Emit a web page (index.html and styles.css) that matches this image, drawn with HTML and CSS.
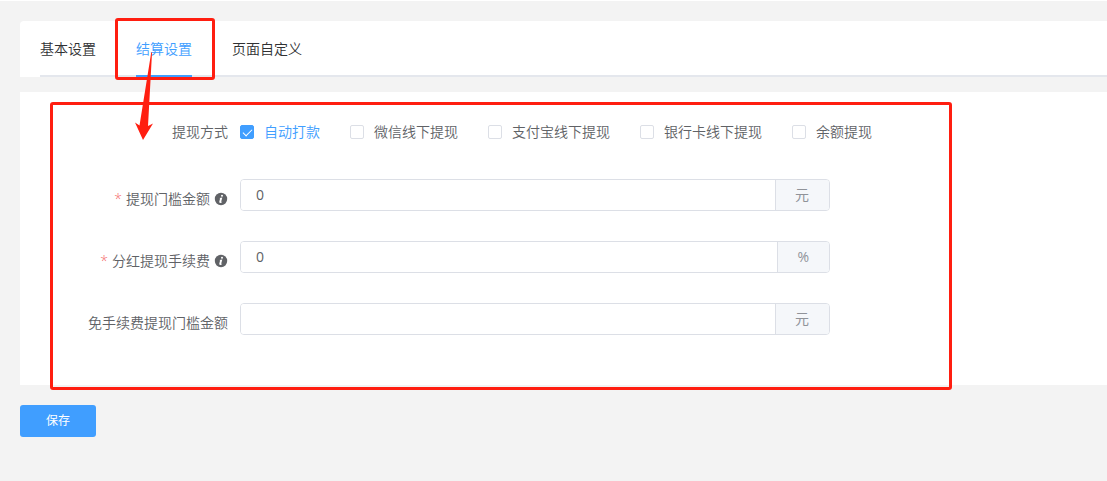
FILE: index.html
```html
<!DOCTYPE html>
<html lang="zh-CN">
<head>
  <meta charset="UTF-8" />
  <meta name="viewport" content="width=device-width, initial-scale=1.0"/>
  <title>结算设置</title>
  <link rel="stylesheet" href="styles.css">
</head>
<body>
  <main class="page">
    <nav class="tabs">
      <div class="tabs-nav">
        <button type="button" class="tab">基本设置</button>
        <button type="button" class="tab active">结算设置<span class="mark mark-tab"></span></button>
        <button type="button" class="tab">页面自定义</button>
      </div>
      <svg class="arrow" width="18" height="88" viewBox="0 0 18 88" aria-hidden="true">
        <path d="M16.300 0 L17 1 L13 74 L18 71.500 L8 88 L0 70.500 L4.500 73.500 Z" fill="#ff1e10"/>
      </svg>
    </nav>

    <form id="settleForm">
      <div class="panel">
        <div class="form-item methods" role="group" aria-labelledby="methodLabel">
          <span class="form-label" id="methodLabel">提现方式</span>
          <div class="checkbox-group">
            <label class="checkbox"><input type="checkbox" name="method" checked><span>自动打款</span></label>
            <label class="checkbox"><input type="checkbox" name="method"><span>微信线下提现</span></label>
            <label class="checkbox"><input type="checkbox" name="method"><span>支付宝线下提现</span></label>
            <label class="checkbox"><input type="checkbox" name="method"><span>银行卡线下提现</span></label>
            <label class="checkbox"><input type="checkbox" name="method"><span>余额提现</span></label>
          </div>
        </div>

        <div class="form-item">
          <label class="form-label required" for="minAmount">提现门槛金额
            <svg class="info" width="14" height="14" viewBox="0 0 14 14" aria-hidden="true">
              <circle cx="7" cy="7" r="6.200" fill="#606266"/>
              <circle cx="8" cy="3.800" r="1" fill="#fff"/>
              <path d="M5.400 6 L8.300 5.600 L7.200 9.800 Q7.100 10.300 8.300 9.500 Q7.500 11 6.200 11 Q4.900 11 5.300 9.600 L6.100 6.600 Z" fill="#fff"/>
            </svg>
          </label>
          <div class="input-group">
            <input type="text" id="minAmount" value="0">
            <span class="append">元</span>
          </div>
        </div>

        <div class="form-item">
          <label class="form-label required" for="feeRate">分红提现手续费
            <svg class="info" width="14" height="14" viewBox="0 0 14 14" aria-hidden="true">
              <circle cx="7" cy="7" r="6.200" fill="#606266"/>
              <circle cx="8" cy="3.800" r="1" fill="#fff"/>
              <path d="M5.400 6 L8.300 5.600 L7.200 9.800 Q7.100 10.300 8.300 9.500 Q7.500 11 6.200 11 Q4.900 11 5.300 9.600 L6.100 6.600 Z" fill="#fff"/>
            </svg>
          </label>
          <div class="input-group">
            <input type="text" id="feeRate" value="0">
            <span class="append">%</span>
          </div>
        </div>

        <div class="form-item">
          <label class="form-label" for="freeAmount">免手续费提现门槛金额</label>
          <div class="input-group">
            <input type="text" id="freeAmount">
            <span class="append">元</span>
          </div>
        </div>
        <span class="mark mark-form"></span>
      </div>

      <button type="submit" class="save">保存</button>
    </form>
  </main>
</body>
</html>
```
FILE: styles.css
```css
* {
  box-sizing: border-box;
}

body {
  margin: 0;
  border-top: 1px solid #fff;
  background: #f3f3f3;
  color: #606266;
  font-family: "Open Sans", "Noto Sans CJK SC", sans-serif;
  font-size: 14px;
  font-weight: 350;
}

button, input {
  font: inherit;
}

.page {
  padding: 20px 0 20px 20px;
}

.tabs {
  position: relative;
  padding-left: 20px;
  background: #fff;
  border-top-left-radius: 4px;
}

.tabs-nav {
  display: flex;
  gap: 40px;
  height: 56px;
  border-bottom: 2px solid #e4e7ed;
}

.tab {
  position: relative;
  height: 56px;
  padding: 2px 0 0;
  border: none;
  border-bottom: 2px solid transparent;
  background: none;
  color: #303133;
  line-height: 52px;
  cursor: pointer;
}

.tab.active {
  color: #409eff;
  border-bottom-color: #409eff;
}

/* red callouts */
.mark {
  position: absolute;
  z-index: 2;
  border: 3px solid #ff1e10;
  border-radius: 3px;
  pointer-events: none;
}

.mark-tab {
  top: -3px;
  left: -21px;
  width: 100px;
  height: 62px;
}

.mark-form {
  top: 10px;
  left: 30px;
  width: 902px;
  height: 288px;
}

.arrow {
  position: absolute;
  z-index: 3;
  top: 31px;
  left: 115px;
  pointer-events: none;
}

.panel {
  position: relative;
  margin-top: 15px;
  padding: 20px 20px 20px 0;
  background: #fff;
}

.form-item {
  display: flex;
  align-items: flex-start;
  margin-bottom: 22px;
}

.methods {
  margin-bottom: 27px;
}

.form-label {
  display: flex;
  flex-shrink: 0;
  align-items: center;
  justify-content: flex-end;
  width: 220px;
  padding-right: 12px;
  line-height: 40px;
}

.required::before {
  content: "*";
  margin-right: 4px;
  color: #f56c6c;
}

.info {
  margin-left: 4px;
}

.checkbox-group {
  display: flex;
  flex-wrap: wrap;
  column-gap: 30px;
}

.checkbox {
  display: flex;
  align-items: center;
  gap: 10px;
  line-height: 40px;
  cursor: pointer;
}

.checkbox input {
  appearance: none;
  display: grid;
  place-items: center;
  width: 14px;
  height: 14px;
  margin: 0;
  border: 1px solid #dcdfe6;
  border-radius: 2px;
  background: #fff;
}

.checkbox input:checked {
  border-color: #409eff;
  background: #409eff;
}

.checkbox input:checked::after {
  content: "";
  width: 4px;
  height: 8px;
  margin-bottom: 2px;
  border: solid #fff;
  border-width: 0 1px 1px 0;
  transform: rotate(45deg);
}

.checkbox input:checked + span {
  color: #409eff;
}

.input-group {
  display: flex;
  flex: 1;
  max-width: 590px;
  height: 32px;
  border: 1px solid #dcdfe6;
  border-radius: 4px;
  overflow: hidden;
}

.input-group input {
  flex: 1;
  min-width: 0;
  padding: 0 15px 2px;
  border: none;
  outline: none;
  background: #fff;
  color: #606266;
  font-weight: 400;
}

.append {
  padding: 0 20px 0 19px;
  border-left: 1px solid #dcdfe6;
  background: #f5f7fa;
  color: #909399;
  font-weight: 400;
  line-height: 30px;
}

.save {
  height: 32px;
  margin-top: 20px;
  padding: 0 26px;
  border: none;
  border-radius: 3px;
  background: #409eff;
  color: #fff;
  font-size: 12px;
  font-weight: 400;
  line-height: 32px;
  cursor: pointer;
}
```
